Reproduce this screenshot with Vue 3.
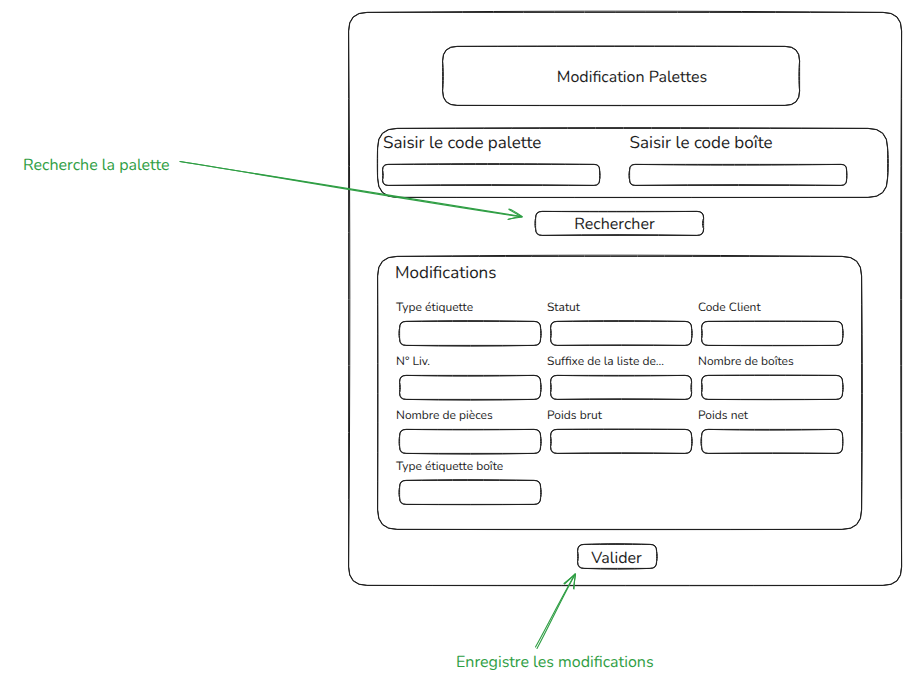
<script setup>
import { defineComponent, h, onBeforeUnmount, onMounted, ref } from 'vue'

const INK = '#1e1e1e'

// Rounded outline traced twice, the second pass drifting from the first.
// drift: outward bow of the second pass in px, as [top, right, bottom, left].
const Sketch = defineComponent({
  props: {
    radius: { type: Number, default: 6 },
    drift: { type: Array, default: () => [1, 0, 1, 1] }
  },
  setup(props) {
    const el = ref(null)
    const size = ref({ w: 0, h: 0 })
    let observer
    const measure = () => {
      const box = el.value.parentElement
      size.value = { w: box.offsetWidth, h: box.offsetHeight }
    }
    onMounted(() => {
      measure()
      observer = new ResizeObserver(measure)
      observer.observe(el.value.parentElement)
    })
    onBeforeUnmount(() => observer && observer.disconnect())

    const trace = (w, hh, r, [t, ri, b, l]) => {
      const x = w - 1
      const y = hh - 1
      return [
        `M${r} 0`,
        `C${w * 0.35} ${-t} ${w * 0.6} ${-t} ${x - r} 0`,
        `Q${x} 0 ${x} ${r}`,
        `C${x + ri} ${hh * 0.35} ${x + ri} ${hh * 0.65} ${x} ${y - r}`,
        `Q${x} ${y} ${x - r} ${y}`,
        `C${w * 0.65} ${y + b} ${w * 0.35} ${y + b} ${r} ${y}`,
        `Q0 ${y} 0 ${y - r}`,
        `C${-l} ${hh * 0.65} ${-l} ${hh * 0.35} 0 ${r}`,
        `Q0 0 ${r} 0`
      ].join(' ')
    }

    return () => {
      const { w, h: hh } = size.value
      const pen = { fill: 'none', stroke: INK, 'stroke-width': 1, transform: 'translate(.6 .4)' }
      return h(
        'svg',
        { ref: el, class: 'sketch', 'aria-hidden': 'true' },
        w
          ? [
              h('path', { ...pen, d: trace(w, hh, props.radius, [0, 0, 0, 0]) }),
              h('path', { ...pen, d: trace(w, hh, props.radius + 1, props.drift) })
            ]
          : []
      )
    }
  }
})

const searchFields = [
  { id: 'code-palette', label: 'Saisir le code palette', drift: [1, 0.8, -1, -1] },
  { id: 'code-boite', label: 'Saisir le code boîte', drift: [-1, 0.6, -1, 1] }
]

const fields = [
  { id: 'type-etiquette', label: 'Type étiquette', drift: [1, 1, 1, 1] },
  { id: 'statut', label: 'Statut', drift: [1, 1, -0.6, -1] },
  { id: 'code-client', label: 'Code Client', drift: [0.4, 1, 0.4, -1] },
  { id: 'num-liv', label: 'N° Liv.', drift: [-1, 1, 1, -1] },
  { id: 'suffixe', label: 'Suffixe de la liste de...', drift: [-0.8, -1, -0.8, -1] },
  { id: 'nombre-boites', label: 'Nombre de boîtes', drift: [0.4, 1, 0.4, -1] },
  { id: 'nombre-pieces', label: 'Nombre de pièces', drift: [-0.6, 1, 1, 0.8] },
  { id: 'poids-brut', label: 'Poids brut', drift: [0.4, 1, -0.8, -1] },
  { id: 'poids-net', label: 'Poids net', drift: [-1, 0.6, -0.6, 1] }
]

const extraFields = [
  { id: 'type-etiquette-boite', label: 'Type étiquette boîte', drift: [1, 1, 0.4, 1] }
]
</script>

<template>
  <main class="board">
    <aside class="side">
      <p class="note">Recherche la palette</p>
    </aside>

    <div class="stage">
      <form class="panel" @submit.prevent>
        <Sketch :radius="18" :drift="[1.6, -1.2, 0.4, -1.6]" />

        <header class="title">
          <Sketch :radius="14" :drift="[0.5, -1, 0.3, -1]" />
          <h1>Modification Palettes</h1>
        </header>

        <section class="search">
          <Sketch :radius="19" :drift="[1, 1, 0.2, 0.4]" />
          <div v-for="f in searchFields" :key="f.id" class="search-field">
            <label :for="f.id">{{ f.label }}</label>
            <div class="box search-box">
              <Sketch :radius="5" :drift="f.drift" />
              <input :id="f.id" type="text" />
            </div>
          </div>
        </section>

        <button type="button" class="btn find">
          <Sketch :radius="6" :drift="[-0.5, -1.5, -1, 1]" />
          Rechercher
        </button>

        <section class="edit">
          <Sketch :radius="19" :drift="[1.6, 1, 0.3, -0.5]" />
          <h2>Modifications</h2>
          <div class="fields">
            <div v-for="f in fields" :key="f.id" class="field">
              <label :for="f.id">{{ f.label }}</label>
              <div class="box">
                <Sketch :drift="f.drift" />
                <input :id="f.id" type="text" />
              </div>
            </div>
          </div>
          <div class="fields">
            <div v-for="f in extraFields" :key="f.id" class="field">
              <label :for="f.id">{{ f.label }}</label>
              <div class="box">
                <Sketch :drift="f.drift" />
                <input :id="f.id" type="text" />
              </div>
            </div>
          </div>
        </section>

        <button type="submit" class="btn save">
          <Sketch :radius="6" :drift="[1, 1, 1, -1]" />
          Valider
        </button>

        <svg class="arrow arrow-find" viewBox="0 0 350 64" aria-hidden="true">
          <path d="M4 4.500 C70 15 180 33 346 59.500" />
          <path d="M4 4.500 C70 14.500 180 35 346 60" />
          <path d="M333 52 Q337 53 346 59.500 M332 62.500 Q339 60 346 59.500" />
          <path d="M333 52.500 L346 60 M333 62 L346 60" />
        </svg>
        <svg class="arrow arrow-save" viewBox="0 0 50 84" aria-hidden="true">
          <path d="M4.500 77 C14 60 26 36 44 4" />
          <path d="M6 78.500 C18 56 29 32 44 4.500" />
          <path d="M33.500 14 Q38 10 44 4 M43 19 Q43 12 44.500 4" />
          <path d="M33 13.500 L44 4.500 M42.500 18.500 L44.500 4" />
        </svg>
      </form>

      <p class="note note-save">Enregistre les modifications</p>
    </div>
  </main>
</template>

<style>
body {
  background: #fff;
}
</style>

<style scoped>
.board,
.board * {
  box-sizing: border-box;
}

.board {
  display: grid;
  grid-template-columns: 348fr 554fr;
  padding: 12px 9px 0 0;
  font-family: Nunito, Lato, "Liberation Sans", sans-serif;
  font-size: 16px;
  line-height: 24px;
  color: #1e1e1e;
  text-rendering: geometricPrecision;
}

h1,
h2,
p {
  margin: 0;
  font-size: inherit;
  font-weight: 400;
}

.note {
  color: #2f9e44;
  white-space: nowrap;
}

.side {
  padding: 141px 0 0 23px;
}

.note-save {
  padding: 64px 0 0 108px;
}

.panel {
  position: relative;
  display: flex;
  flex-direction: column;
  padding: 34px 14px 17px 29px;
}

.sketch {
  position: absolute;
  inset: 0;
  width: 100%;
  height: 100%;
  overflow: visible;
  pointer-events: none;
}

.title {
  position: relative;
  margin: 0 88px 0 65px;
  padding: 19px 0 17px 22px;
  text-align: center;
}

.search {
  position: relative;
  display: grid;
  grid-template-columns: 1fr 1fr;
  gap: 29px;
  margin-top: 22px;
  padding: 4px 42px 12px 5px;
}

.search-field label {
  display: block;
  padding-left: 1px;
  font-size: 17px;
}

.box {
  position: relative;
  height: 25px;
}

.search-box {
  height: 22px;
  margin-top: 8px;
}

input {
  display: block;
  width: 100%;
  height: 100%;
  padding: 0 8px;
  border: 0;
  background: none;
  color: inherit;
  font: inherit;
  outline-offset: -2px;
}

.btn {
  position: relative;
  align-self: center;
  height: 25px;
  padding: 0;
  border: 0;
  background: none;
  color: inherit;
  font: inherit;
  text-rendering: inherit;
  cursor: pointer;
}

.find {
  width: 169px;
  margin: 13px 26px 0 0;
  padding-right: 10px;
}

.edit {
  position: relative;
  margin: 20px 26px 0 0;
  padding: 6px 19px 25px 18px;
}

.edit h2 {
  margin-bottom: 14px;
  font-size: 17px;
}

.fields {
  display: grid;
  grid-template-columns: repeat(3, 1fr);
  gap: 8px 5px;
}

.fields + .fields {
  margin-top: 5px;
}

.field label {
  display: block;
  margin-bottom: 5px;
  padding-left: 1px;
  font-size: 12px;
  line-height: 16px;
  white-space: nowrap;
}

.field .box {
  margin-left: 4px;
}

.save {
  width: 80px;
  margin: 14px 32px 0 0;
  padding-top: 2px;
}

.arrow {
  position: absolute;
  fill: none;
  stroke: #2f9e44;
  stroke-width: 1.1;
  stroke-linecap: round;
  pointer-events: none;
}

.arrow-find {
  left: -172px;
  top: 145px;
  width: 350px;
  height: 64px;
}

.arrow-save {
  left: 183px;
  top: 558px;
  width: 50px;
  height: 84px;
}
</style>
